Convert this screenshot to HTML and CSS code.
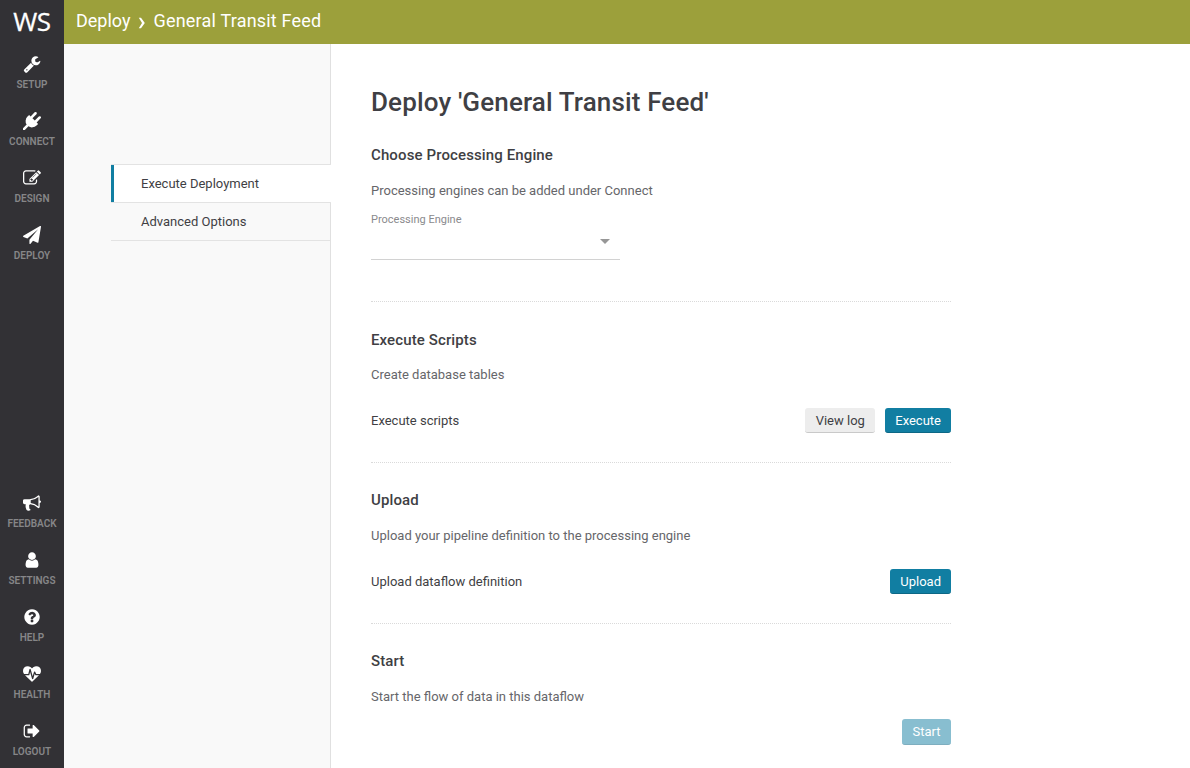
FILE: index.html
```html
<!DOCTYPE html>
<html lang="en">
<head>
<meta charset="utf-8">
<title>Deploy</title>
<link rel="stylesheet" href="styles.css">
</head>
<body>
<div class="app">
  <nav class="rail">
    <div class="logo">WS</div>
    <a class="rail-item"><svg class="icon" viewBox="0 0 1792 1792"><path d="M448 1472q0-26-19-45t-45-19-45 19-19 45 19 45 45 19 45-19 19-45zm644-420l-682 682q-37 37-90 37-52 0-91-37l-106-108q-38-36-38-90 0-53 38-91l681-681q39 98 114.500 173.500t173.500 114.500zm634-435q0 39-23 106-47 134-164.500 217.500t-258.500 83.500q-185 0-316.500-131.500t-131.500-316.500 131.500-316.500 316.500-131.500q58 0 121.500 16.500t107.500 46.500q16 11 16 28t-16 28l-293 169v224l193 107q5-3 79-48.500t135.500-81 70.500-35.500q15 0 23.500 10t8.500 25z"/></svg><span>SETUP</span></a>
    <a class="rail-item"><svg class="icon" viewBox="0 0 1792 1792"><path d="M1755 453q37 38 37 90.500t-37 90.500l-401 400 150 150-160 160q-163 163-389.500 186.500t-411.500-100.500l-362 362h-181v-181l362-362q-124-185-100.500-411.500t186.500-389.500l160-160 150 150 400-401q38-37 91-37t90 37 37 90.500-37 90.500l-400 401 234 234 401-400q38-37 91-37t90 37z"/></svg><span>CONNECT</span></a>
    <a class="rail-item"><svg class="icon" viewBox="0 0 1792 1792"><path d="M888 1184l116-116-152-152-116 116v56h96v96h56zm440-720q-16-16-33 1l-350 350q-17 17-1 33t33-1l350-350q17-17 1-33zm80 594v190q0 119-84.500 203.500t-203.500 84.500h-832q-119 0-203.500-84.500t-84.500-203.500v-832q0-119 84.500-203.500t203.500-84.500h832q63 0 117 25 15 7 18 23 3 17-9 29l-49 49q-14 14-32 8-23-6-45-6h-832q-66 0-113 47t-47 113v832q0 66 47 113t113 47h832q66 0 113-47t47-113v-126q0-13 9-22l64-64q15-15 35-7t20 29zm-96-738l288 288-672 672h-288v-288zm444 132l-92 92-288-288 92-92q28-28 68-28t68 28l152 152q28 28 28 68t-28 68z"/></svg><span>DESIGN</span></a>
    <a class="rail-item"><svg class="icon" viewBox="0 0 1792 1792"><path d="M1764 11q33 24 27 64l-256 1536q-5 29-32 45-14 8-31 8-11 0-24-5l-453-185-242 295q-18 23-49 23-13 0-22-4-19-7-30.500-23.500t-11.500-36.500v-349l864-1059-1069 925-395-162q-37-14-40-55-2-40 32-59l1664-960q15-9 32-9 20 0 36 11z"/></svg><span>DEPLOY</span></a>
    <div class="rail-spacer"></div>
    <a class="rail-item"><svg class="icon" viewBox="0 0 1792 1792"><path d="M1664 640q53 0 90.500 37.500t37.500 90.500-37.500 90.500-90.500 37.500v384q0 52-38 90t-90 38q-417-347-812-380-58 19-91 66t-31 100.500 40 92.500q-20 33-23 65.500t6 58 33.500 55 48 50 61.500 50.500q-29 58-111.500 83t-168.500 11.500-132-55.500q-7-23-29.500-87.500t-32-94.500-23-89-15-101 3.500-98.500 22-110.500h-122q-66 0-113-47t-47-113v-192q0-66 47-113t113-47h480q435 0 896-384 52 0 90 38t38 90v384zm-128 604v-954q-394 302-768 343v270q377 42 768 341z"/></svg><span>FEEDBACK</span></a>
    <a class="rail-item"><svg class="icon" viewBox="0 0 1792 1792"><path d="M1536 1399q0 109-62.500 187t-150.500 78h-854q-88 0-150.500-78t-62.500-187q0-85 8.500-160.500t31.500-152 58.500-131 94-89 134.500-34.500q131 128 313 128t313-128q76 0 134.500 34.500t94 89 58.500 131 31.500 152 8.500 160.500zm-256-887q0 159-112.500 271.500t-271.500 112.500-271.500-112.500-112.500-271.500 112.500-271.500 271.500-112.500 271.500 112.500 112.500 271.500z"/></svg><span>SETTINGS</span></a>
    <a class="rail-item"><svg class="icon" viewBox="0 0 1792 1792"><path d="M1024 1376v-192q0-14-9-23t-23-9h-192q-14 0-23 9t-9 23v192q0 14 9 23t23 9h192q14 0 23-9t9-23zm256-672q0-88-55.500-163t-138.500-116-170-41q-243 0-371 213-15 24 8 42l132 100q7 6 19 6 16 0 25-12 53-68 86-92 34-24 86-24 48 0 85.500 26t37.500 59q0 38-20 61t-68 45q-63 28-115.500 86.500t-52.500 125.500v36q0 14 9 23t23 9h192q14 0 23-9t9-23q0-19 21.500-49.500t54.500-49.500q32-18 49-28.500t46-35 44.500-48 28-60.500 12.500-81zm384 192q0 209-103 385.500t-279.500 279.500-385.500 103-385.500-103-279.500-279.500-103-385.500 103-385.500 279.500-279.500 385.500-103 385.500 103 279.500 279.500 103 385.500z"/></svg><span>HELP</span></a>
    <a class="rail-item"><svg class="icon" viewBox="0 0 1792 1792"><path d="M1280 1024h305q-5 6-10 10.500t-9 7.500l-3 4-623 600q-18 18-44 18t-44-18l-624-602q-5-2-21-20h369q22 0 39.500-13.500t22.500-34.500l70-281 190 667q6 20 23 33t39 13q21 0 38-13t23-33l146-485 56 112q18 35 57 35zm512-428q0 145-103 300h-369l-111-221q-8-17-25.500-27t-36.500-8q-45 5-56 46l-129 430-196-686q-6-20-23.500-33t-39.500-13-39 13.500-22 34.500l-116 464h-423q-103-155-103-300 0-220 127-344t351-124q62 0 126.500 21.500t120 58 95.500 68.500 76 68q36-36 76-68t95.500-68.500 120-58 126.500-21.500q224 0 351 124t127 344z"/></svg><span>HEALTH</span></a>
    <a class="rail-item"><svg class="icon" viewBox="0 0 1792 1792"><path d="M704 1440q0 4 1 20t.5 26.500-3 23.500-10 19.500-20.500 6.500h-320q-119 0-203.500-84.500t-84.500-203.500v-704q0-119 84.500-203.500t203.500-84.500h320q13 0 22.500 9.500t9.500 22.500q0 4 1 20t.5 26.500-3 23.500-10 19.500-20.500 6.500h-320q-66 0-113 47t-47 113v704q0 66 47 113t113 47h312l11.500 1 11.500 3 8 5.500 7 9 2 13.500zm928-544q0 26-19 45l-544 544q-19 19-45 19t-45-19-19-45v-288h-448q-26 0-45-19t-19-45v-384q0-26 19-45t45-19h448v-288q0-26 19-45t45-19 45 19l544 544q19 19 19 45z"/></svg><span>LOGOUT</span></a>
  </nav>
  <div class="main">
    <header class="topbar"><span>Deploy</span><svg class="chevron" viewBox="0 0 8 12"><path d="M0.800 0.800h2.200L6.800 6 3 11.200H0.800L4 6z"/></svg><span class="crumb">General Transit Feed</span></header>
    <div class="body">
      <aside class="side">
        <a class="tab active">Execute Deployment</a>
        <a class="tab">Advanced Options</a>
      </aside>
      <main class="content">
        <h1>Deploy 'General Transit Feed'</h1>
        <section class="section engine">
          <h2>Choose Processing Engine</h2>
          <p>Processing engines can be added under Connect</p>
          <label class="field-label">Processing Engine</label>
          <div class="select"><svg class="caret" viewBox="0 0 10 5"><path d="M0 0h10L5 5z"/></svg></div>
        </section>
        <section class="section scripts">
          <h2>Execute Scripts</h2>
          <p>Create database tables</p>
          <div class="row"><span class="row-name">Execute scripts</span><button class="btn plain">View log</button><button class="btn">Execute</button></div>
        </section>
        <section class="section upload">
          <h2>Upload</h2>
          <p>Upload your pipeline definition to the processing engine</p>
          <div class="row"><span class="row-name">Upload dataflow definition</span><button class="btn">Upload</button></div>
        </section>
        <section class="section start">
          <h2>Start</h2>
          <p>Start the flow of data in this dataflow</p>
          <div class="row"><button class="btn disabled">Start</button></div>
        </section>
      </main>
    </div>
  </div>
</div>
</body>
</html>
```
FILE: styles.css
```css
* { box-sizing: border-box; }
body { margin: 0; font-family: Roboto, sans-serif; font-size: 13px; color: #3f3f44; background: #fff; }
.app { display: flex; height: 768px; overflow: hidden; }

.rail { width: 64px; flex: none; display: flex; flex-direction: column; background: #323135; }
.logo { height: 44px; flex: none; font: 26px/43px "Open Sans", sans-serif; letter-spacing: -0.3px; -webkit-text-stroke: 0.3px #fff; color: #fff; text-align: center; }
.rail-item { height: 57px; flex: none; display: flex; flex-direction: column; align-items: center; padding-top: 11px; font-size: 10px; font-weight: 600; line-height: 12px; color: #868688; }
.icon { width: 18px; height: 18px; margin-bottom: 6px; fill: #fff; }
.rail-spacer { flex: 1; }

.main { flex: 1; display: flex; flex-direction: column; }
.topbar { height: 44px; flex: none; display: flex; align-items: center; padding: 0 12px 3px; background: #9ca03b; color: #fff; font-size: 18px; }
.crumb { letter-spacing: 0.2px; }
.chevron { width: 8px; height: 12px; margin: 5px 7.5px 0 7.5px; fill: #fff; }
.body { flex: 1; display: flex; min-height: 0; }

.side { width: 267px; flex: none; padding: 120px 0 0 47px; background: #f9f9f9; border-right: 1px solid #e0e0e0; }
.tab { display: block; height: 38px; padding-left: 30px; line-height: 37px; border-bottom: 1px solid #e3e3e3; }
.tab.active { height: 39px; margin-right: -1px; background: #fff; border-top: 1px solid #e3e3e3; box-shadow: inset 3px 0 #117ea2; }

.content { width: 620px; padding: 40px 0 0 40px; }
h1 { margin: 0; font-size: 26px; font-weight: 500; line-height: 36px; letter-spacing: 0.14px; }
h2 { margin: 0; font-size: 15px; font-weight: 500; line-height: 20px; letter-spacing: 0.12px; }
p { margin: 0; line-height: 16px; color: #66666a; }
.section { border-bottom: 1px dotted #dadada; }
.section p { margin-top: 18px; }
.engine { height: 182px; padding-top: 25px; }
.scripts { height: 161px; padding-top: 28px; }
.scripts p { margin-top: 17px; }
.upload { height: 161px; padding-top: 27px; }
.start { padding-top: 27px; border: 0; }
.field-label { display: block; margin-top: 14px; font-size: 11px; line-height: 14px; color: #8a8a8d; }
.select { width: 249px; height: 33px; display: flex; justify-content: flex-end; padding: 12px 10px 0 0; border-bottom: 1px solid #d2d2d2; }
.caret { width: 10px; height: 5px; fill: #979797; }

.row { display: flex; align-items: center; gap: 10px; margin-top: 25px; }
.row-name { flex: 1; }
.btn { height: 25px; padding: 1px 10px 0; border: 0; border-bottom: 1px solid #0d6785; border-radius: 3px; background: #117ea2; color: #fff; font: 13px/23px Roboto, sans-serif; }
.btn.plain { width: 70px; background: #ededed; border-color: #c9c9c9; color: #3f3f44; }
.btn.disabled { height: 26px; padding: 0 10.5px; background: #88bed0; border-color: #7eaebf; }
.start .row { justify-content: flex-end; margin-top: 14px; }
```
